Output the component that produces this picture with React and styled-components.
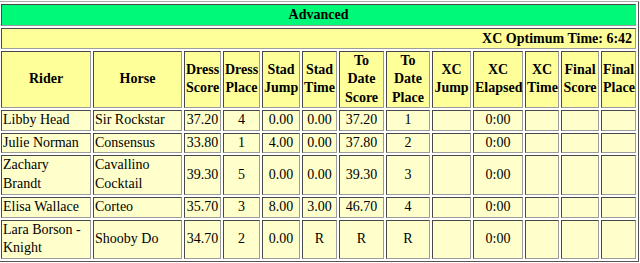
import React from "react";
import styled, { createGlobalStyle } from "styled-components";

const GlobalStyle = createGlobalStyle`
  body {
    margin: 1px 0 0 -2px;
    background: #ffffff;
    font-family: "Liberation Serif", "Times New Roman", serif;
    overflow: hidden;
  }
`;

const Table = styled.table`
  width: 641px;
  table-layout: fixed;
  border-collapse: separate;
  border-spacing: 2px;
  border: 1px outset #a8a8a8;
  font-size: 14px;
  line-height: 18.75px;
  color: #000;
`;

const Col = styled.col`
  width: ${(p) => p.$w}px;
`;

const TitleCell = styled.th`
  background: #00fa78;
  border: 1px inset #9c9c9c;
  padding: 0 1px;
  text-align: center;
  font-weight: bold;
  line-height: 20px;
`;

const InfoCell = styled.th`
  background: #ffff99;
  border: 1px inset #9c9c9c;
  padding: 0 3px;
  text-align: right;
  font-weight: bold;
  line-height: 19px;
`;

const HeadCell = styled.th`
  background: #ffff99;
  border: 1px inset #9c9c9c;
  padding: 0 1px;
  text-align: center;
  vertical-align: middle;
  font-weight: bold;
  line-height: 18.3px;
`;

const Cell = styled.td`
  background: #ffffcc;
  border: 1px inset #9c9c9c;
  padding: 0 1px;
  text-align: ${(p) => (p.$left ? "left" : "center")};
  vertical-align: middle;
`;

const widths = [90, 89, 37, 37, 38, 35, 45, 44, 39, 50, 34, 38, 35];

const headers = [
  "Rider",
  "Horse",
  "Dress Score",
  "Dress Place",
  "Stad Jump",
  "Stad Time",
  "To Date Score",
  "To Date Place",
  "XC Jump",
  "XC Elapsed",
  "XC Time",
  "Final Score",
  "Final Place",
];

const results = [
  ["Libby Head", "Sir Rockstar", "37.20", "4", "0.00", "0.00", "37.20", "1", "", "0:00", "", "", ""],
  ["Julie Norman", "Consensus", "33.80", "1", "4.00", "0.00", "37.80", "2", "", "0:00", "", "", ""],
  ["Zachary Brandt", "Cavallino Cocktail", "39.30", "5", "0.00", "0.00", "39.30", "3", "", "0:00", "", "", ""],
  ["Elisa Wallace", "Corteo", "35.70", "3", "8.00", "3.00", "46.70", "4", "", "0:00", "", "", ""],
  ["Lara Borson - Knight", "Shooby Do", "34.70", "2", "0.00", "R", "R", "R", "", "0:00", "", "", ""],
];

export default function App() {
  return (
    <>
      <GlobalStyle />
      <Table>
        <colgroup>
          {widths.map((w, i) => (
            <Col key={i} $w={w} />
          ))}
        </colgroup>
        <thead>
          <tr>
            <TitleCell colSpan={13}>Advanced</TitleCell>
          </tr>
          <tr>
            <InfoCell colSpan={13}>XC Optimum Time: 6:42</InfoCell>
          </tr>
          <tr>
            {headers.map((h) => (
              <HeadCell key={h}>{h}</HeadCell>
            ))}
          </tr>
        </thead>
        <tbody>
          {results.map((row) => (
            <tr key={row[0]}>
              {row.map((v, i) => (
                <Cell key={i} $left={i < 2}>
                  {v || "\u00a0"}
                </Cell>
              ))}
            </tr>
          ))}
        </tbody>
      </Table>
    </>
  );
}
